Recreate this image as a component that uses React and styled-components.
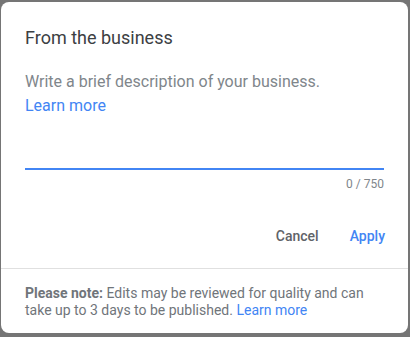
import React from "react";
import styled, { createGlobalStyle } from "styled-components";

const Global = createGlobalStyle`
  html, body { margin: 0; padding: 0; }
  body {
    background: #757575;
    font-family: Roboto, "Liberation Sans", Arial, sans-serif;
    -webkit-font-smoothing: antialiased;
  }
`;

const Stage = styled.div`
  width: 410px;
  height: 337px;
  padding: 2px 2px 0 1px;
  box-sizing: border-box;
  overflow: hidden;
`;

const Dialog = styled.div`
  width: 407px;
  height: 331px;
  background: #fff;
  border-radius: 8px;
  display: flex;
  flex-direction: column;
  box-sizing: border-box;
`;

const Body = styled.div`
  padding: 24px 24px 0 24px;
  display: flex;
  flex-direction: column;
`;

const Title = styled.h2`
  margin: 0;
  font-family: Roboto, "Liberation Sans", Arial, sans-serif;
  font-weight: 400;
  font-size: 18px;
  line-height: 24px;
  color: #3c4043;
`;

const Description = styled.div`
  margin-top: 20px;
  font-size: 16px;
  line-height: 24px;
  color: #80868b;
`;

const Link = styled.a`
  color: #4285f4;
  text-decoration: none;
  font-size: ${(p) => p.$size || 16}px;
  cursor: pointer;
`;

const Field = styled.div`
  margin-top: 26px;
  height: 24px;
  border-bottom: 2px solid #4285f4;
`;

const Counter = styled.div`
  margin-top: 6px;
  text-align: right;
  font-size: 12px;
  line-height: 16px;
  color: #80868b;
`;

const Actions = styled.div`
  display: flex;
  justify-content: flex-end;
  gap: 15px;
  padding: 26px 15px 0 0;
`;

const Button = styled.button`
  background: none;
  border: none;
  padding: 8px 8px;
  font-family: Roboto, "Liberation Sans", Arial, sans-serif;
  font-weight: 500;
  font-size: 14px;
  line-height: 20px;
  color: ${(p) => (p.$primary ? "#4285f4" : "#5f6368")};
  cursor: pointer;
`;

const Divider = styled.div`
  margin-top: 14px;
  border-top: 1px solid #e0e0e0;
`;

const Note = styled.p`
  margin: 0;
  padding: 16px 24px;
  font-size: 14px;
  line-height: 17px;
  color: #70757a;
  strong { font-weight: 700; color: #70757a; }
`;

export default function App() {
  return (
    <Stage>
      <Global />
      <Dialog>
        <Body>
          <Title>From the business</Title>
          <Description>
            Write a brief description of your business.
            <br />
            <Link>Learn more</Link>
          </Description>
          <Field />
          <Counter>0 / 750</Counter>
        </Body>
        <Actions>
          <Button>Cancel</Button>
          <Button $primary>Apply</Button>
        </Actions>
        <Divider />
        <Note>
          <strong>Please note:</strong> Edits may be reviewed for quality and can take up to 3 days to be published.{" "}
          <Link $size={14}>Learn more</Link>
        </Note>
      </Dialog>
    </Stage>
  );
}
